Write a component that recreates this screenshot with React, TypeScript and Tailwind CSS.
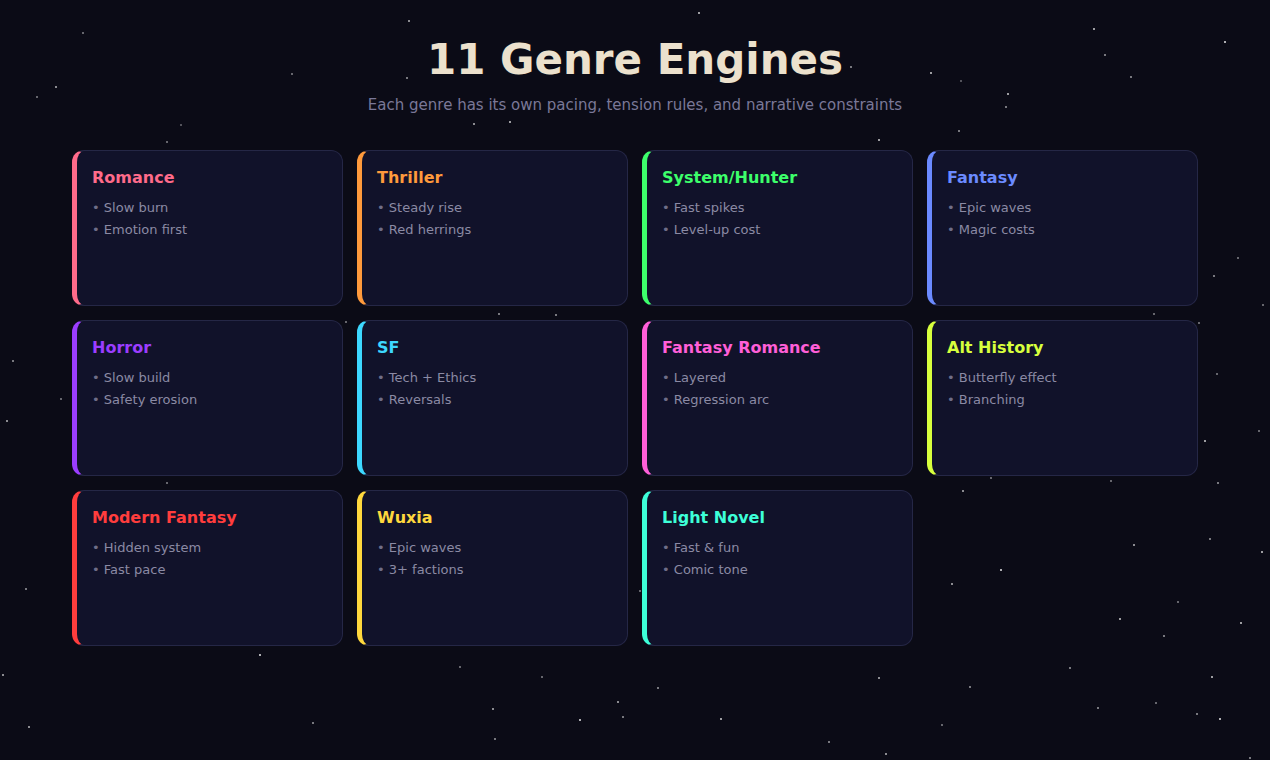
import React from "react";

const genres = [
  { name: "Romance", color: "#ff6b8a", border: "border-l-[#ff6b8a]", text: "text-[#ff6b8a]", items: ["Slow burn", "Emotion first"] },
  { name: "Thriller", color: "#ff9a3c", border: "border-l-[#ff9a3c]", text: "text-[#ff9a3c]", items: ["Steady rise", "Red herrings"] },
  { name: "System/Hunter", color: "#3dff6b", border: "border-l-[#3dff6b]", text: "text-[#3dff6b]", items: ["Fast spikes", "Level-up cost"] },
  { name: "Fantasy", color: "#6b8aff", border: "border-l-[#6b8aff]", text: "text-[#6b8aff]", items: ["Epic waves", "Magic costs"] },
  { name: "Horror", color: "#9b3dff", border: "border-l-[#9b3dff]", text: "text-[#9b3dff]", items: ["Slow build", "Safety erosion"] },
  { name: "SF", color: "#3dd8ff", border: "border-l-[#3dd8ff]", text: "text-[#3dd8ff]", items: ["Tech + Ethics", "Reversals"] },
  { name: "Fantasy Romance", color: "#ff5fd8", border: "border-l-[#ff5fd8]", text: "text-[#ff5fd8]", items: ["Layered", "Regression arc"] },
  { name: "Alt History", color: "#d8ff3d", border: "border-l-[#d8ff3d]", text: "text-[#d8ff3d]", items: ["Butterfly effect", "Branching"] },
  { name: "Modern Fantasy", color: "#ff3d3d", border: "border-l-[#ff3d3d]", text: "text-[#ff3d3d]", items: ["Hidden system", "Fast pace"] },
  { name: "Wuxia", color: "#ffd83d", border: "border-l-[#ffd83d]", text: "text-[#ffd83d]", items: ["Epic waves", "3+ factions"] },
  { name: "Light Novel", color: "#3dffd8", border: "border-l-[#3dffd8]", text: "text-[#3dffd8]", items: ["Fast & fun", "Comic tone"] },
];

const stars: [number, number, number][] = [
  [698,12,0.8],[408,20,0.7],[82,32,0.5],[1093,28,0.8],[1224,41,0.9],[1104,54,0.6],[55,86,0.7],[36,96,0.5],
  [291,73,0.5],[930,72,0.8],[1130,76,0.6],[406,77,0.6],[1007,93,0.8],[960,80,0.4],[1005,106,0.6],[473,123,0.7],
  [509,121,0.8],[958,130,0.6],[166,141,0.5],[878,139,0.8],[1237,257,0.5],[1213,275,0.6],[1262,304,0.5],[1153,313,0.5],
  [498,313,0.6],[555,314,0.6],[12,360,0.6],[60,398,0.5],[6,420,0.7],[1216,373,0.5],[1204,440,0.8],[1258,430,0.5],
  [1217,482,0.6],[962,490,0.7],[990,477,0.5],[516,490,0.5],[166,482,0.5],[1133,544,0.7],[1209,538,0.6],[1261,551,0.8],
  [1000,569,0.9],[951,583,0.7],[25,588,0.6],[1177,601,0.5],[1119,618,0.8],[1163,635,0.6],[1240,622,0.8],[639,590,0.5],
  [259,654,0.9],[459,666,0.5],[1069,667,0.6],[878,677,0.7],[969,686,0.6],[1211,676,0.8],[2,674,0.7],[541,676,0.5],
  [657,687,0.6],[617,701,0.7],[492,708,0.7],[1097,707,0.6],[1196,713,0.6],[1219,718,0.9],[28,726,0.7],[312,722,0.6],
  [579,719,0.9],[720,718,0.8],[622,716,0.6],[941,724,0.5],[494,738,0.6],[828,741,0.6],[885,753,0.7],[1249,757,0.6],
  [1198,322,0.5],[345,321,0.5],[1110,480,0.5],[180,124,0.4],[850,66,0.6],[1155,702,0.5],
];

export default function App() {
  return (
    <div
      className="relative w-[1270px] h-[760px] overflow-hidden bg-[#0b0b16]"
      style={{ fontFamily: '"DejaVu Sans", Verdana, sans-serif' }}
    >
      <div className="absolute inset-0 pointer-events-none">
        {stars.map(([x, y, o], i) => (
          <div
            key={i}
            className="absolute rounded-full bg-white"
            style={{ left: x, top: y, width: i % 5 === 0 ? 2 : 1.5, height: i % 5 === 0 ? 2 : 1.5, opacity: o }}
          />
        ))}
      </div>
      <div className="relative flex flex-col items-center pt-[35px] px-[72px]">
        <h1 className="text-[42px] leading-[50px] font-bold text-[#ece1cd]">11 Genre Engines</h1>
        <p className="mt-[10px] text-[15px] leading-[20px] text-[#7a7898]">
          Each genre has its own pacing, tension rules, and narrative constraints
        </p>
        <div className="mt-[35px] grid grid-cols-4 gap-[14px] w-full">
          {genres.map((g) => (
            <div
              key={g.name}
              className={`h-[156px] rounded-xl border border-[#252746] border-l-[5px] ${g.border} bg-[#11122a] pl-[15px] pt-[17px]`}
            >
              <div className={`text-[16px] leading-[20px] font-bold ${g.text}`}>{g.name}</div>
              <ul className="mt-[9px]">
                {g.items.map((it) => (
                  <li key={it} className="text-[13px] leading-[22px] text-[#8b8aa4]">
                    <span className="text-[#6f6e88]">•</span> {it}
                  </li>
                ))}
              </ul>
            </div>
          ))}
        </div>
      </div>
    </div>
  );
}
